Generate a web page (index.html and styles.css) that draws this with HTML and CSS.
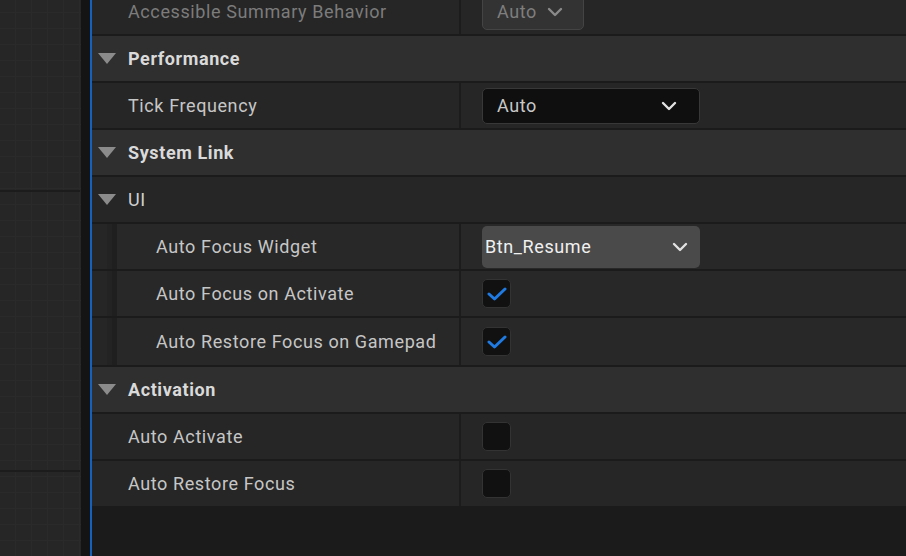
FILE: index.html
```html
<!DOCTYPE html>
<html lang="en">
<head>
  <meta charset="UTF-8">
  <title>Details</title>
  <link rel="stylesheet" href="styles.css">
</head>
<body>
  <div class="editor">
    <div class="graph">
      <div class="graph-split top"></div>
      <div class="graph-split bottom"></div>
    </div>
    <div class="gutter"></div>

    <div class="details">
      <div class="row prop first dim">
        <div class="name">Accessible Summary Behavior</div>
        <div class="value">
          <div class="combo small">
            <span>Auto</span>
            <svg class="chev" viewBox="0 0 16 10"><path d="M2 2 L8 8 L14 2"/></svg>
          </div>
        </div>
      </div>

      <div class="row header">
        <svg class="arrow" viewBox="0 0 18 11"><polygon points="0,0 18,0 9,11"/></svg>
        <span>Performance</span>
      </div>
      <div class="row prop">
        <div class="name">Tick Frequency</div>
        <div class="value">
          <div class="combo">
            <span>Auto</span>
            <svg class="chev" viewBox="0 0 16 10"><path d="M2 2 L8 8 L14 2"/></svg>
          </div>
        </div>
      </div>

      <div class="row header">
        <svg class="arrow" viewBox="0 0 18 11"><polygon points="0,0 18,0 9,11"/></svg>
        <span>System Link</span>
      </div>

      <div class="row header sub">
        <svg class="arrow" viewBox="0 0 18 11"><polygon points="0,0 18,0 9,11"/></svg>
        <span>UI</span>
      </div>
      <div class="group">
        <div class="row prop child">
          <div class="indent"></div>
          <div class="name">Auto Focus Widget</div>
          <div class="value">
            <div class="combo hot">
              <span>Btn_Resume</span>
              <svg class="chev" viewBox="0 0 16 10"><path d="M2 2 L8 8 L14 2"/></svg>
            </div>
          </div>
        </div>
        <div class="row prop child">
          <div class="indent"></div>
          <div class="name">Auto Focus on Activate</div>
          <div class="value">
            <div class="check">
              <svg viewBox="0 0 20 14"><path d="M2 7 L7.5 12 L18 2"/></svg>
            </div>
          </div>
        </div>
        <div class="row prop child last">
          <div class="indent"></div>
          <div class="name">Auto Restore Focus on Gamepad</div>
          <div class="value">
            <div class="check">
              <svg viewBox="0 0 20 14"><path d="M2 7 L7.5 12 L18 2"/></svg>
            </div>
          </div>
        </div>
      </div>

      <div class="row header">
        <svg class="arrow" viewBox="0 0 18 11"><polygon points="0,0 18,0 9,11"/></svg>
        <span>Activation</span>
      </div>
      <div class="row prop">
        <div class="name">Auto Activate</div>
        <div class="value"><div class="check off"></div></div>
      </div>
      <div class="row prop">
        <div class="name">Auto Restore Focus</div>
        <div class="value"><div class="check off"></div></div>
      </div>
    </div>
  </div>
</body>
</html>
```

FILE: styles.css
```css
/* Details panel, dark editor theme */
html, body {
  margin: 0;
  height: 100%;
  overflow: hidden;
  background: #1b1b1b;
  font-family: Roboto, "Noto Sans", sans-serif;
  font-size: 18px;
  letter-spacing: 0.6px;
}
.editor {
  display: flex;
  height: 100%;
}

/* graph area on the left */
.graph {
  position: relative;
  width: 81px;
  flex: none;
  background-color: #262626;
  background-image:
    repeating-linear-gradient(90deg, transparent 0 15px, #2a2a2a 15px 16px),
    repeating-linear-gradient(0deg, transparent 0 15px, #2a2a2a 15px 16px);
}
.graph-split {
  position: absolute;
  left: 0;
  right: 1px;
  height: 2px;
  background: #1c1c1c;
}
.graph-split.top { top: 190px; }
.graph-split.bottom { top: 470px; }
.gutter {
  width: 9px;
  flex: none;
  background: #141414;
}

/* property list */
.details {
  flex: 1;
  display: flex;
  flex-direction: column;
  gap: 2px;
  border-left: 2px solid #1660be;
  background: #1b1b1b;
}
.row {
  height: 45px;
  flex: none;
  display: flex;
  align-items: center;
  background: #262626;
  color: #c6c6c6;
}
.row.first {
  margin-top: -11px;
}
.row.header {
  background: #2f2f2f;
  color: #dadada;
  font-weight: bold;
  padding-left: 6px;
}
.row.header.sub {
  background: #262626;
  font-weight: normal;
  color: #d0d0d0;
}
.arrow {
  width: 18px;
  height: 11px;
  margin-right: 12px;
  fill: #8b8b8b;
}
.name {
  width: 369px;
  flex: none;
  box-sizing: border-box;
  padding-left: 36px;
  height: 100%;
  display: flex;
  align-items: center;
  border-right: 2px solid #1c1c1c;
}
.dim .name {
  color: #7c7c7c;
}
.value {
  flex: 1;
  display: flex;
  align-items: center;
  padding-left: 21px;
  height: 100%;
}

/* nested group rows */
.group {
  display: flex;
  flex-direction: column;
  gap: 2px;
}
.row.child {
  background: #282828;
}
.row.child.last {
  height: 47px;
}
.indent {
  width: 25px;
  height: 100%;
  flex: none;
  background: linear-gradient(90deg, #262626 0 15px, #232323 15px 20px, #1f1f1f 20px);
}
.child .name {
  width: 344px;
  padding-left: 39px;
}

/* combo boxes */
.combo {
  box-sizing: border-box;
  width: 218px;
  height: 36px;
  display: flex;
  align-items: center;
  justify-content: space-between;
  padding: 0 22px 0 14px;
  background: #0f0f0f;
  border: 1px solid #383838;
  border-radius: 5px;
  color: #c8c8c8;
}
.combo.small {
  width: 102px;
  background: #333333;
  border-color: #444444;
  color: #7e7e7e;
  padding: 0 20px 0 14px;
}
.combo.small .chev { stroke: #8a8a8a; }
.combo.hot {
  height: 42px;
  background: #4a4a4a;
  border: none;
  padding: 0 12px 0 3px;
  color: #f0f0f0;
}
.chev {
  width: 16px;
  height: 10px;
  fill: none;
  stroke: #e2e2e2;
  stroke-width: 2.4;
  stroke-linecap: round;
  stroke-linejoin: round;
}

/* check boxes */
.check {
  box-sizing: border-box;
  width: 29px;
  height: 29px;
  border: 1px solid #333333;
  border-radius: 5px;
  background: #111111;
  display: flex;
  align-items: center;
  justify-content: center;
}
.check svg {
  width: 20px;
  height: 14px;
  fill: none;
  stroke: #1f7ae2;
  stroke-width: 3;
  stroke-linecap: round;
  stroke-linejoin: round;
}
```
